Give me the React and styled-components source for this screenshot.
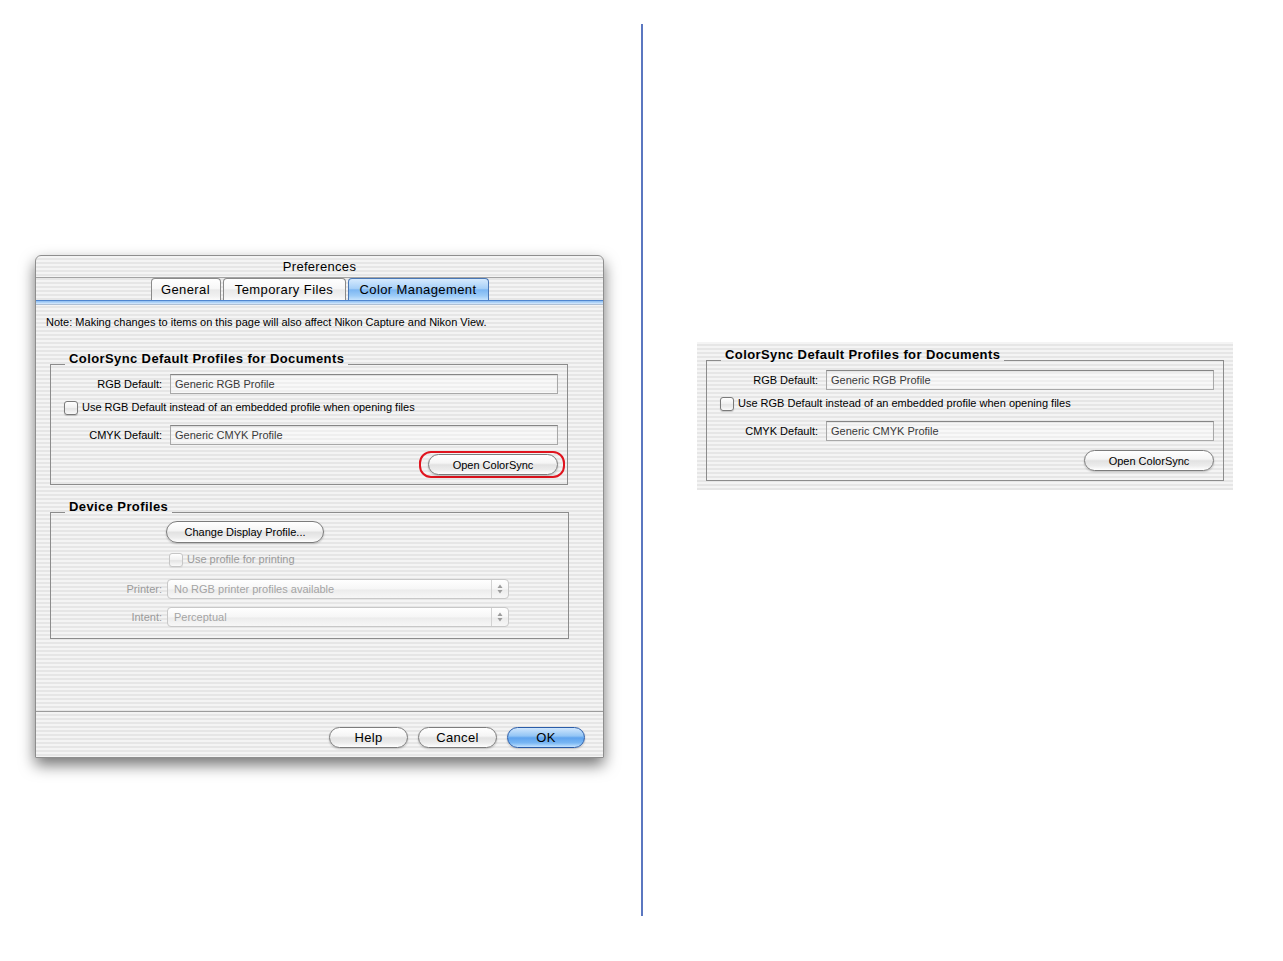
import React from 'react';
import styled, { createGlobalStyle } from 'styled-components';

const GlobalStyle = createGlobalStyle`
  html, body {
    margin: 0;
    padding: 0;
    background: #fff;
  }
  body {
    font-family: "Liberation Sans", Arial, sans-serif;
    color: #000;
  }
`;

const stripes = `repeating-linear-gradient(180deg, #f4f4f4 0px, #f4f4f4 2px, #e6e6e6 2px, #e6e6e6 4px)`;

const Page = styled.div`
  display: flex;
  width: 1283px;
  height: 961px;
  overflow: hidden;
`;

const LeftColumn = styled.div`
  width: 641px;
  padding: 255px 0 0 35px;
  box-sizing: border-box;
`;

const Divider = styled.div`
  width: 2px;
  height: 892px;
  margin-top: 24px;
  background: #5b77c0;
`;

const RightColumn = styled.div`
  padding: 342px 0 0 54px;
`;

/* dialog window */
const Window = styled.div`
  width: 569px;
  height: 503px;
  box-sizing: border-box;
  display: flex;
  flex-direction: column;
  background: ${stripes};
  border: 1px solid #8e8e8e;
  border-radius: 6px 6px 0 0;
  box-shadow: 0 7px 15px rgba(0, 0, 0, 0.55);
`;

const TitleBar = styled.div`
  height: 21px;
  line-height: 21px;
  text-align: center;
  font-size: 13px;
  letter-spacing: 0.3px;
  border-bottom: 1px solid #a3a3a3;
`;

const TabStrip = styled.div`
  display: flex;
  justify-content: center;
  align-items: flex-end;
  gap: 2px;
  height: 22px;
`;

const Tab = styled.div`
  width: ${(p) => p.$w}px;
  height: 22px;
  box-sizing: border-box;
  border: 1px solid ${(p) => (p.$active ? '#4a77b5' : '#8a8a8a')};
  border-bottom: none;
  border-radius: 4px 4px 0 0;
  font-size: 13px;
  letter-spacing: 0.4px;
  line-height: 21px;
  text-align: center;
  background: ${(p) =>
    p.$active
      ? 'linear-gradient(180deg, #d6eafd 0%, #a7d0f8 45%, #7cb6f2 52%, #9ccbf7 80%, #c6e3fd 100%)'
      : 'linear-gradient(180deg, #ffffff 0%, #f7f7f7 45%, #e9e9e9 52%, #f0f0f0 80%, #fbfbfb 100%)'};
`;

const TabLine = styled.div`
  height: 5px;
  box-sizing: border-box;
  border-top: 1px solid #4f86d0;
  background: linear-gradient(180deg, #8dbdf0 0%, #b3d5f8 55%, #dcecfc 100%);
  border-bottom: 1px solid #aebfd4;
`;

const Content = styled.div`
  flex: 1;
  display: flex;
  flex-direction: column;
`;

const Note = styled.div`
  padding: 10px 0 0 10px;
  font-size: 11px;
  line-height: 14px;
`;

/* group boxes */
const Group = styled.fieldset`
  margin: ${(p) => p.$top}px ${(p) => p.$right}px 0 ${(p) => p.$left}px;
  padding: 0 0 ${(p) => p.$bottom}px 0;
  min-width: 0;
  border: 1px solid #8c8c8c;
  display: flex;
  flex-direction: column;
`;

const Legend = styled.legend`
  margin-left: 14px;
  padding: 0 4px 10px;
  font-size: 13px;
  font-weight: bold;
  letter-spacing: 0.4px;
  line-height: 16px;
`;

const FormRow = styled.div`
  display: grid;
  grid-template-columns: 111px 1fr;
  column-gap: ${(p) => p.$gap || 8}px;
  align-items: center;
  margin-top: ${(p) => p.$mt}px;
  padding-right: 9px;
`;

const Label = styled.div`
  text-align: right;
  font-size: 11px;
  color: ${(p) => (p.$disabled ? '#9a9a9a' : '#000')};
`;

const Field = styled.div`
  height: 20px;
  box-sizing: border-box;
  border: 1px solid #a8a8a8;
  border-top-color: #858585;
  background: rgba(255, 255, 255, 0.35);
  box-shadow: inset 0 1px 1px rgba(0, 0, 0, 0.08);
  padding-left: 4px;
  font-size: 11px;
  line-height: 18px;
  color: #3a3a3a;
`;

const CheckRow = styled.label`
  display: flex;
  align-items: center;
  gap: 4px;
  margin: ${(p) => p.$mt}px 0 0 ${(p) => p.$indent}px;
  font-size: 11px;
  line-height: 15px;
  color: ${(p) => (p.$disabled ? '#9a9a9a' : '#000')};
`;

const Checkbox = styled.span`
  width: 14px;
  height: 14px;
  box-sizing: border-box;
  border: 1px solid ${(p) => (p.$disabled ? '#c6c6c6' : '#7a7a7a')};
  border-radius: 3px;
  background: linear-gradient(180deg, #ffffff 0%, #f0f0f0 50%, #e4e4e4 55%, #fafafa 100%);
  box-shadow: 0 1px 1px rgba(0, 0, 0, ${(p) => (p.$disabled ? 0.05 : 0.18)});
`;

const ButtonRow = styled.div`
  display: flex;
  justify-content: flex-end;
  margin-top: ${(p) => p.$mt}px;
  padding-right: 2px;
`;

const Ring = styled.div`
  display: flex;
  padding: 1px 5px 1px 7px;
  border: 2px solid ${(p) => (p.$on ? '#e0141e' : 'transparent')};
  border-radius: 12px;
`;

const AquaButton = styled.button`
  width: ${(p) => p.$w}px;
  height: ${(p) => p.$h || 21}px;
  box-sizing: border-box;
  padding: 0;
  border: 1px solid ${(p) => (p.$default ? '#2a5ca8' : '#7c7c7c')};
  border-radius: 11px;
  font-family: inherit;
  font-size: ${(p) => p.$size || 13}px;
  letter-spacing: ${(p) => (p.$size ? 0 : 0.3)}px;
  color: #000;
  background: ${(p) =>
    p.$default
      ? 'linear-gradient(180deg, #cfe6fd 0%, #93c5f5 42%, #5fa3ee 52%, #78b6f3 78%, #c4e3ff 100%)'
      : 'linear-gradient(180deg, #ffffff 0%, #f5f5f5 42%, #e2e2e2 52%, #ececec 78%, #ffffff 100%)'};
  box-shadow: 0 1px 2px rgba(0, 0, 0, 0.22);
`;

const ButtonCell = styled.div`
  display: flex;
`;

const Popup = styled.div`
  width: 342px;
  height: 20px;
  box-sizing: border-box;
  display: flex;
  border: 1px solid #c8c8c8;
  border-radius: 4px;
  background: linear-gradient(180deg, #ffffff 0%, #f6f6f6 50%, #ececec 55%, #f7f7f7 100%);
  font-size: 11px;
  color: #a4a4a4;
`;

const PopupText = styled.div`
  flex: 1;
  padding-left: 6px;
  line-height: 18px;
`;

const PopupArrows = styled.div`
  width: 16px;
  border-left: 1px solid #d2d2d2;
  display: flex;
  align-items: center;
  justify-content: center;
`;

const BottomBar = styled.div`
  display: flex;
  justify-content: flex-end;
  gap: 10px;
  padding: 15px 18px 9px 0;
  border-top: 1px solid #9c9c9c;
`;

/* cropped panel on the right */
const Panel = styled.div`
  width: 536px;
  height: 148px;
  box-sizing: border-box;
  padding: 5px 9px 0 9px;
  background: ${stripes};
`;

const Steppers = () => (
  <svg width="6" height="10" viewBox="0 0 6 10">
    <path d="M3 0.5 L5.5 4 L0.5 4 Z" fill="#9c9c9c" />
    <path d="M3 9.5 L5.5 6 L0.5 6 Z" fill="#9c9c9c" />
  </svg>
);

const ProfilesGroup = ({ highlighted, top, right, left }) => (
  <Group $top={top} $right={right} $left={left} $bottom={6}>
    <Legend>ColorSync Default Profiles for Documents</Legend>
    <FormRow $mt={-3}>
      <Label>RGB Default:</Label>
      <Field>Generic RGB Profile</Field>
    </FormRow>
    <CheckRow $mt={6} $indent={13}>
      <Checkbox />
      Use RGB Default instead of an embedded profile when opening files
    </CheckRow>
    <FormRow $mt={10}>
      <Label>CMYK Default:</Label>
      <Field>Generic CMYK Profile</Field>
    </FormRow>
    <ButtonRow $mt={6}>
      <Ring $on={highlighted}>
        <AquaButton $w={130} $size={11}>Open ColorSync</AquaButton>
      </Ring>
    </ButtonRow>
  </Group>
);

const App = () => {
  return (
    <Page>
      <GlobalStyle />
      <LeftColumn>
        <Window>
          <TitleBar>Preferences</TitleBar>
          <TabStrip>
            <Tab $w={70}>General</Tab>
            <Tab $w={123}>Temporary Files</Tab>
            <Tab $w={141} $active>Color Management</Tab>
          </TabStrip>
          <TabLine />
          <Content>
            <Note>Note: Making changes to items on this page will also affect Nikon Capture and Nikon View.</Note>
            <ProfilesGroup highlighted top={22} right={35} left={14} />

            <Group $top={14} $right={34} $left={14} $bottom={11}>
              <Legend>Device Profiles</Legend>
              <FormRow $mt={-4} $gap={4}>
                <span />
                <ButtonCell>
                  <AquaButton $w={158} $h={22} $size={11}>Change Display Profile...</AquaButton>
                </ButtonCell>
              </FormRow>
              <CheckRow $mt={9} $indent={118} $disabled>
                <Checkbox $disabled />
                Use profile for printing
              </CheckRow>
              <FormRow $mt={12} $gap={5}>
                <Label $disabled>Printer:</Label>
                <Popup>
                  <PopupText>No RGB printer profiles available</PopupText>
                  <PopupArrows><Steppers /></PopupArrows>
                </Popup>
              </FormRow>
              <FormRow $mt={8} $gap={5}>
                <Label $disabled>Intent:</Label>
                <Popup>
                  <PopupText>Perceptual</PopupText>
                  <PopupArrows><Steppers /></PopupArrows>
                </Popup>
              </FormRow>
            </Group>
          </Content>
          <BottomBar>
            <AquaButton $w={79}>Help</AquaButton>
            <AquaButton $w={79}>Cancel</AquaButton>
            <AquaButton $w={78} $default>OK</AquaButton>
          </BottomBar>
        </Window>
      </LeftColumn>
      <Divider />
      <RightColumn>
        <Panel>
          <ProfilesGroup top={0} right={0} left={0} />
        </Panel>
      </RightColumn>
    </Page>
  );
};

export default App;
